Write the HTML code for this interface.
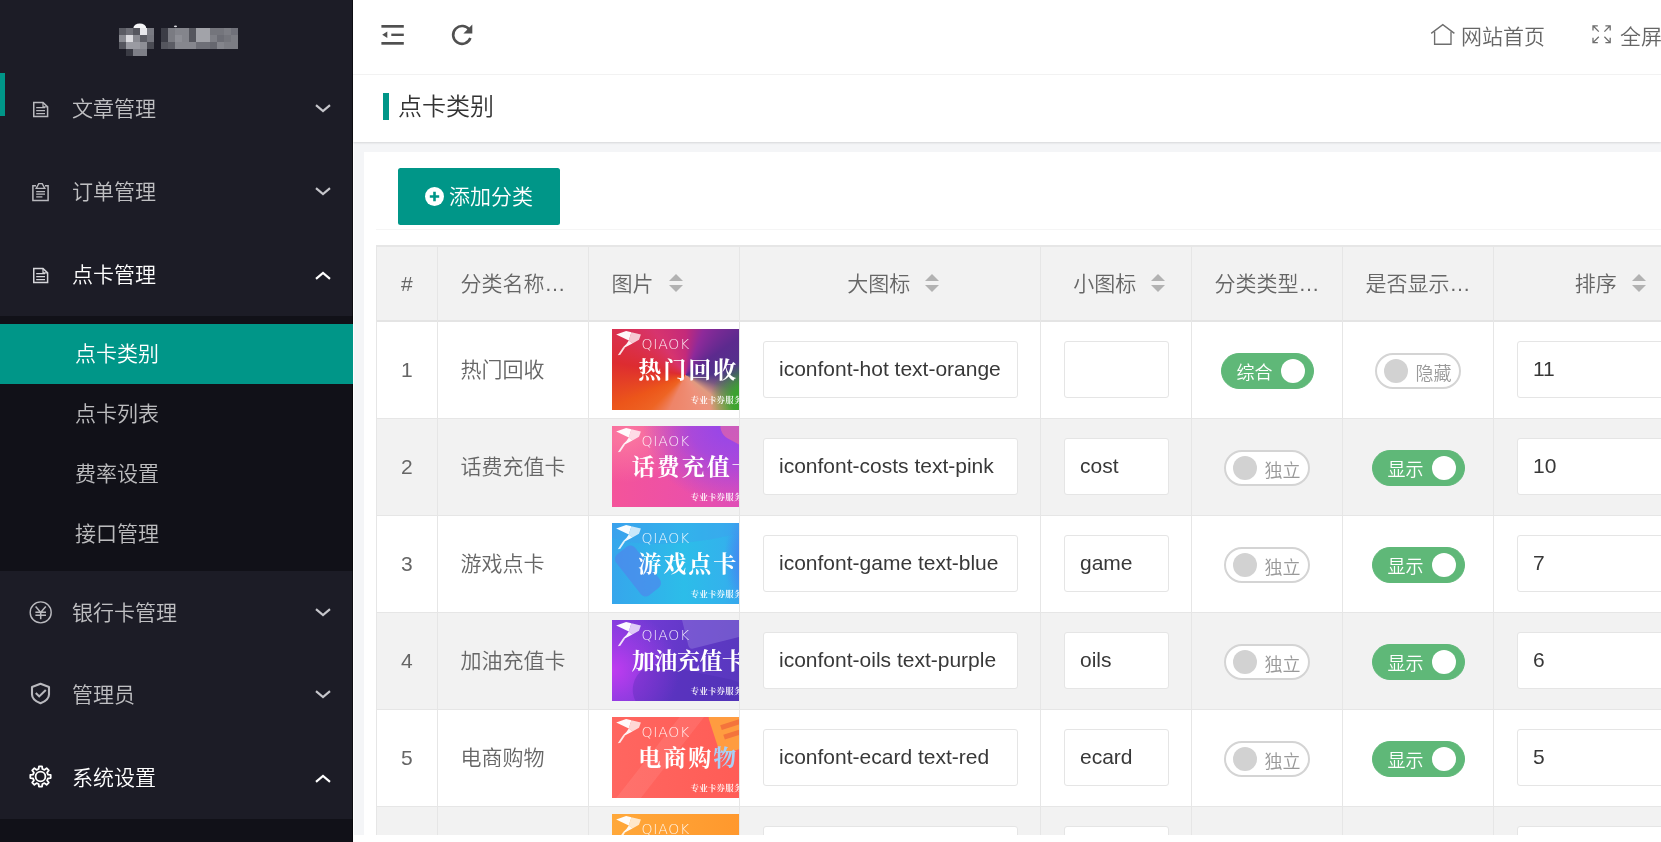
<!DOCTYPE html>
<html lang="zh-CN">
<head>
<meta charset="utf-8">
<title>点卡类别</title>
<style>
*{box-sizing:border-box;margin:0;padding:0}
html,body{width:1661px;height:842px;overflow:hidden;background:#fff}
body{position:relative;font-family:"Liberation Sans","Noto Sans CJK SC",sans-serif;font-size:21px;font-weight:350;color:#666}
#wrap{position:absolute;left:0;top:0;width:1661px;height:842px;overflow:hidden;will-change:transform}
.abs{position:absolute}
/* ---------- sidebar ---------- */
#side{position:absolute;left:0;top:0;width:353px;height:842px;background:#1c1c26;overflow:hidden;box-shadow:inset -1px 0 0 rgba(0,0,0,.5)}
.navbar{position:absolute;left:0;top:73px;width:5px;height:43px;background:#009688}
.nav-item{position:absolute;left:0;width:353px;height:83px;color:rgba(255,255,255,.72);font-size:21px;line-height:83px}
.nav-item.on{color:#fff}
.nav-item .txt{position:absolute;left:72px;top:0;white-space:nowrap}
.nav-item svg.ic{position:absolute}
.nav-item svg.chev{position:absolute;left:314.5px;top:36.5px}
.nav-item.on svg.chev{top:37.5px}
.child{position:absolute;left:0;width:353px;background:rgba(0,0,0,.36)}
.child .dd{position:absolute;left:0;width:353px;height:60px;line-height:60px;padding-left:75px;color:rgba(255,255,255,.72);font-size:21px;white-space:nowrap}
.child .dd.this{background:#009688;color:#fff}
/* ---------- header ---------- */
#top{position:absolute;left:353px;top:0;width:1308px;height:75px;background:#fff;border-bottom:1px solid #f4f4f4}
#top .lnk{position:absolute;top:0;height:74px;line-height:73px;font-size:21px;color:#666;white-space:nowrap}
#title{z-index:3;position:absolute;left:353px;top:75px;width:1308px;height:67px;background:#fff;box-shadow:0 1px 2px rgba(0,0,0,.12)}
#title .bar{position:absolute;left:30px;top:18px;width:6px;height:27px;background:#009688}
#title .t{position:absolute;left:45px;top:0;height:66px;line-height:64px;font-size:24px;color:#333;white-space:nowrap}
/* ---------- body ---------- */
#bodybg{position:absolute;left:354px;top:142px;width:1307px;height:693px;background:#f4f5f7}
#card{position:absolute;left:364px;top:152px;width:1297px;height:690px;background:#fff;overflow:hidden}
.btn{position:absolute;left:34px;top:16px;width:162px;height:57px;background:#009688;border-radius:2.5px;color:#fff;font-size:21px;line-height:56px;white-space:nowrap}
.btn svg{position:absolute;left:26px;top:18px}
.btn span{position:absolute;left:51px;top:1px}
.hr{position:absolute;left:12px;top:76.5px;width:1290px;height:1.5px;background:#f5f5f5}
#tbl{position:absolute;left:12px;top:93px;width:1285px;height:590px;overflow:hidden;background:#fff}
.thead{position:absolute;left:0;top:0;width:1285px;height:77px;background:#f2f2f2;border-top:2px solid #e6e6e6;border-bottom:2px solid #e4e4e4}
.th{position:absolute;top:0;height:73px;line-height:69px;padding-left:22.5px;color:#666;font-size:21px;white-space:nowrap;overflow:hidden}
.th.c{text-align:center;padding:0 22.5px}
.th span{vertical-align:middle}
.sort{display:inline-block;position:relative;width:15px;height:30px;margin-left:7.5px;vertical-align:middle}
.sort i{position:absolute;left:7.5px;width:0;height:0;border-left:7.5px solid transparent;border-right:7.5px solid transparent}
.sort .up{top:6px;border-bottom:7.5px solid #b2b2b2}
.sort .dn{top:16.5px;border-top:7.5px solid #b2b2b2}
.tr{position:absolute;left:0;width:1285px;height:97px;border-bottom:1px solid #e6e6e6;background:#fff}
.tr.even{background:#f2f2f2}
.td{position:absolute;top:0;height:96px;padding-left:22.5px;overflow:hidden}
.tx{line-height:96px;white-space:nowrap;color:#666;font-size:21px}
.vl{position:absolute;top:0;width:1px;height:600px;background:#e6e6e6}
.inp{position:absolute;left:22.5px;top:19px;height:57px;border:1.5px solid #e5e5e5;border-radius:3px;background:#fff;padding-left:15.5px;line-height:53px;color:#383838;font-size:21px;white-space:nowrap;overflow:hidden}
.sw{position:absolute;top:31px;height:36px;border-radius:18px;font-size:18px;line-height:35px}
.sw em{position:absolute;top:0;font-style:normal;white-space:nowrap}
.sw i{position:absolute;top:5px;width:24px;height:24px;border-radius:12px}
.sw.on{left:29px;width:93px;background:#5FB878;border:1px solid #5FB878}
.sw.on em{left:14.5px;top:2px;color:#fff}
.sw.on i{left:59px;background:#fff}
.sw.off{left:32px;width:86px;background:#fff;border:2px solid #d4d4d4}
.sw.off em{left:38.5px;color:#999;top:1.5px}
.sw.off i{left:6.5px;top:4px;background:#d2d2d2}
.bn{position:absolute;left:22.5px;top:7px;width:160px;height:80.5px;overflow:hidden;color:#fff}
.bn .bird{position:absolute;left:0;top:0}
.bn .lg{position:absolute;left:30px;top:8px;font-size:14px;line-height:15px;letter-spacing:.75px;color:rgba(255,255,255,.9);font-family:"DejaVu Sans Light","DejaVu Sans",sans-serif;font-weight:200}
.bn .tt{position:absolute;top:25px;font-family:"Noto Serif CJK SC","Noto Sans CJK SC",serif;font-weight:700;font-size:23px;line-height:30px;letter-spacing:2px;white-space:nowrap}
.bn .tt i{font-style:normal;color:#a9d0f6}
.bn .sm{position:absolute;left:79px;top:64px;font-family:"Noto Serif CJK SC","Noto Sans CJK SC",serif;font-weight:700;font-size:8.5px;line-height:12px;letter-spacing:.2px;white-space:nowrap;color:rgba(255,255,255,.88)}
.bn b{position:absolute;display:block}
.b1{background:radial-gradient(ellipse 26% 52% at 87% 90%,#34a62a 0%,rgba(52,166,42,.92) 45%,rgba(58,154,98,0) 100%),conic-gradient(from 0deg at 46% 57%,#c42a7a 0deg,#8e2a9a 22deg,#5c2a8e 55deg,#50348a 88deg,#7a5a80 106deg,#e09a80 128deg,#ee927c 150deg,#ee8468 205deg,#ee6424 226deg,#ec561a 246deg,#dd2c30 280deg,#d7346e 325deg,#c42a7a 360deg)}
.b1 .deco{left:134px;top:-4px;width:30px;height:26px;background:rgba(165,140,120,.55);border-radius:50% 50% 40% 40%}
.b1 .deco2{display:none}
.b2{background:radial-gradient(ellipse 55% 95% at 74% 0%,#9446ea 0%,rgba(148,70,234,.75) 45%,rgba(148,70,234,0) 100%),radial-gradient(ellipse 40% 60% at 8% 10%,#fb7aa0 0%,rgba(251,122,160,0) 100%),linear-gradient(90deg,#f4549a 0%,#ec50a8 45%,#d84cc0 100%)}
.b2 .deco{left:108px;top:-12px;width:60px;height:34px;background:rgba(250,110,150,.55);border-radius:14px;transform:rotate(28deg)}
.b2 .deco2{display:none}
.b3{background:radial-gradient(ellipse 30% 75% at 100% 45%,#4a78f2 0%,rgba(74,120,242,.85) 55%,rgba(74,120,242,0) 100%),linear-gradient(90deg,#36a6ec 0%,#2cbde9 45%,#33b2ec 70%,#3f90f0 100%)}
.b3 .deco{left:14.5px;top:22px;width:24px;height:52px;background:rgba(84,128,236,.6);border-radius:6px;transform:rotate(-38deg)}
.b3 .deco2{left:-10px;top:-34px;width:190px;height:52px;background:rgba(70,150,240,.28);border-radius:50%;transform:rotate(-8deg)}
.b4{background:radial-gradient(ellipse 42% 75% at 0% 62%,#c03cf0 0%,rgba(176,60,236,.6) 45%,rgba(150,60,230,0) 100%),linear-gradient(100deg,#7c3cdc 0%,#6238c8 45%,#5638bc 85%)}
.b4 .deco{left:72px;top:-14px;width:66px;height:36px;background:rgba(150,130,225,.42);transform:rotate(-14deg);border-radius:4px}
.b4 .deco2{left:20px;top:52px;width:120px;height:50px;background:rgba(70,40,170,.28);transform:rotate(12deg);border-radius:30px}
.b4 .tt{letter-spacing:-.4px}
.b5{background:linear-gradient(128deg,rgba(255,255,255,0) 0%,rgba(255,255,255,0) 30%,rgba(255,255,255,.08) 30.5%,rgba(255,255,255,.08) 41%,rgba(255,255,255,0) 41.5%),linear-gradient(90deg,#ff6660 0%,#ff5a54 100%)}
.b5 .deco{left:100px;top:-16px;width:60px;height:46px;border-radius:9px;background:#ff9c40;transform:rotate(-18deg)}
.b5 .deco2{left:108px;top:2px;width:40px;height:5px;background:#f4743c;transform:rotate(-18deg);box-shadow:0 10px 0 #f4743c}
.b6{background:linear-gradient(90deg,#ffa83a 0%,#ff942a 100%)}
.b6 .deco,.b6 .deco2{display:none}
</style>
</head>
<body>
<div id="wrap">
<div id="side">
<svg class="abs" style="left:110px;top:18px" width="140" height="44" viewBox="110 18 140 44" shape-rendering="crispEdges">
<ellipse cx="139.8" cy="28" rx="6.4" ry="4.6" fill="#f6f6f8" shape-rendering="auto"/>
<ellipse cx="175.5" cy="26.4" rx="1.6" ry="0.8" fill="#d8d8dc" shape-rendering="auto"/>
<g>
<rect x="119" y="28" width="7" height="7" fill="#5a5b63"/><rect x="126" y="28" width="7" height="7" fill="#6e6f77"/><rect x="133" y="28" width="7" height="7" fill="#55565e"/><rect x="140" y="28" width="7" height="7" fill="#e8e8ec"/><rect x="147" y="28" width="7" height="7" fill="#7a7b83"/>
<rect x="119" y="35" width="7" height="7" fill="#8a8b92"/><rect x="126" y="35" width="7" height="7" fill="#dcdce0"/><rect x="133" y="35" width="7" height="7" fill="#8a8b92"/><rect x="140" y="35" width="7" height="7" fill="#5c5d65"/><rect x="147" y="35" width="7" height="7" fill="#75767e"/>
<rect x="119" y="42" width="7" height="7" fill="#55565e"/><rect x="126" y="42" width="7" height="7" fill="#9a9ba2"/><rect x="133" y="42" width="7" height="7" fill="#9a9ba2"/><rect x="140" y="42" width="7" height="7" fill="#8e8f96"/><rect x="147" y="42" width="7" height="7" fill="#4a4b53"/>
<rect x="126" y="49" width="7" height="7" fill="#3a3b44"/><rect x="133" y="49" width="7" height="7" fill="#7e7f87"/><rect x="140" y="49" width="7" height="7" fill="#7e7f87"/>
</g>
<g>
<rect x="161" y="28" width="7" height="14" fill="#3c3d46"/><rect x="168" y="28" width="7" height="14" fill="#7a7b82"/><rect x="175" y="28" width="7" height="7" fill="#84858c"/><rect x="182" y="28" width="7" height="14" fill="#84858c"/><rect x="175" y="35" width="7" height="7" fill="#8e8f96"/><rect x="189" y="28" width="7" height="14" fill="#55565e"/><rect x="196" y="28" width="14" height="14" fill="#a2a3a9"/><rect x="210" y="28" width="14" height="7" fill="#74757c"/><rect x="224" y="28" width="7" height="7" fill="#7c7d84"/><rect x="231" y="28" width="7" height="7" fill="#70717a"/>
<rect x="210" y="35" width="7" height="7" fill="#7e7f86"/><rect x="217" y="35" width="7" height="7" fill="#6c6d75"/><rect x="224" y="35" width="7" height="7" fill="#74757c"/><rect x="231" y="35" width="7" height="7" fill="#7c7d84"/>
<rect x="161" y="42" width="7" height="7" fill="#55565e"/><rect x="168" y="42" width="7" height="7" fill="#5c5d65"/><rect x="175" y="42" width="21" height="7" fill="#86878e"/><rect x="196" y="42" width="14" height="7" fill="#6e6f77"/><rect x="210" y="42" width="7" height="7" fill="#66676f"/><rect x="217" y="42" width="7" height="7" fill="#84858c"/><rect x="224" y="42" width="14" height="7" fill="#7c7d84"/>
</g>
</svg>
<div class="navbar"></div>

<div class="nav-item" style="top:67px">
<svg class="ic" style="left:32px;top:34px" width="17" height="17" viewBox="0 0 17 17" fill="none" stroke="#b9b9be" stroke-width="1.5"><path d="M1.75 1.6H11L15.6 5.8V15.4H1.75Z"/><path d="M11 1.6V5.8H15.6" stroke-width="1.2"/><path d="M4.2 6.7H13M4.2 9.6H13M4.2 12.6H13" stroke-width="1.3"/></svg>
<span class="txt">文章管理</span>
<svg class="chev" width="16" height="9" viewBox="0 0 16 9" fill="none" stroke="#c6c6cb" stroke-width="2.2"><path d="M1 1.2L8 7L15 1.2"/></svg>
</div>

<div class="nav-item" style="top:150px">
<svg class="ic" style="left:31px;top:32px" width="19" height="20" viewBox="0 0 19 20" fill="none" stroke="#b9b9be" stroke-width="1.5"><path d="M5 3.8H1.9V18.6H17.1V3.8H14"/><path d="M5.2 6.4L7.8 1.6H11.2L13.8 6.4Z" stroke-width="1.4"/><path d="M5.2 9.6H14M5.2 12.2H14M5.2 14.9H11.4" stroke-width="1.3"/></svg>
<span class="txt">订单管理</span>
<svg class="chev" width="16" height="9" viewBox="0 0 16 9" fill="none" stroke="#c6c6cb" stroke-width="2.2"><path d="M1 1.2L8 7L15 1.2"/></svg>
</div>

<div class="nav-item on" style="top:233px">
<svg class="ic" style="left:32px;top:34px" width="17" height="17" viewBox="0 0 17 17" fill="none" stroke="#d6d6da" stroke-width="1.5"><path d="M1.75 1.6H11L15.6 5.8V15.4H1.75Z"/><path d="M11 1.6V5.8H15.6" stroke-width="1.2"/><path d="M4.2 6.7H13M4.2 9.6H13M4.2 12.6H13" stroke-width="1.3"/></svg>
<span class="txt">点卡管理</span>
<svg class="chev" width="16" height="9" viewBox="0 0 16 9" fill="none" stroke="#fff" stroke-width="2.2"><path d="M1 7.8L8 2L15 7.8"/></svg>
</div>

<div class="child" style="top:316px;height:255px">
<div class="dd this" style="top:8px">点卡类别</div>
<div class="dd" style="top:68px">点卡列表</div>
<div class="dd" style="top:128px">费率设置</div>
<div class="dd" style="top:188px">接口管理</div>
</div>

<div class="nav-item" style="top:571px">
<svg class="ic" style="left:28px;top:29px" width="25" height="25" viewBox="0 0 25 25" fill="none" stroke="#b9b9be" stroke-width="1.55"><circle cx="12.7" cy="12.4" r="10.5" stroke-width="1.4"/><path d="M7.6 6.4L12.7 12.4L17.8 6.4M12.7 12.4V19.2M7.4 12.2H18M7.4 15.2H18"/></svg>
<span class="txt">银行卡管理</span>
<svg class="chev" width="16" height="9" viewBox="0 0 16 9" fill="none" stroke="#c6c6cb" stroke-width="2.2"><path d="M1 1.2L8 7L15 1.2"/></svg>
</div>

<div class="nav-item" style="top:653px">
<svg class="ic" style="left:29px;top:28px" width="23" height="26" viewBox="0 0 23 26" fill="none" stroke="#b9b9be" stroke-width="1.9"><path d="M11.5 2.7L20 5.9V13.4C20 17.4 16.6 20.2 11.5 22.3C6.4 20.2 3 17.4 3 13.4V5.9Z" stroke-width="2.1" stroke-linejoin="round"/><path d="M6.8 12L10.2 15.4L16.8 9" stroke-width="2.1"/></svg>
<span class="txt">管理员</span>
<svg class="chev" width="16" height="9" viewBox="0 0 16 9" fill="none" stroke="#c6c6cb" stroke-width="2.2"><path d="M1 1.2L8 7L15 1.2"/></svg>
</div>

<div class="nav-item on" style="top:736px">
<svg class="ic" style="left:28px;top:28px" width="25" height="25" viewBox="-12.5 -12.5 25 25" fill="none" stroke="#fff" stroke-width="1.8" stroke-linejoin="round"><circle cx="0" cy="0" r="4.9"/><path d="M-1.91 -7.46 L-1.54 -10.18 L1.54 -10.18 L1.91 -7.46 L3.93 -6.62 L6.11 -8.29 L8.29 -6.11 L6.62 -3.93 L7.46 -1.91 L10.18 -1.54 L10.18 1.54 L7.46 1.91 L6.62 3.93 L8.29 6.11 L6.11 8.29 L3.93 6.62 L1.91 7.46 L1.54 10.18 L-1.54 10.18 L-1.91 7.46 L-3.93 6.62 L-6.11 8.29 L-8.29 6.11 L-6.62 3.93 L-7.46 1.91 L-10.18 1.54 L-10.18 -1.54 L-7.46 -1.91 L-6.62 -3.93 L-8.29 -6.11 L-6.11 -8.29 L-3.93 -6.62Z"/></svg>
<span class="txt">系统设置</span>
<svg class="chev" width="16" height="9" viewBox="0 0 16 9" fill="none" stroke="#fff" stroke-width="2.2"><path d="M1 7.8L8 2L15 7.8"/></svg>
</div>

<div class="child" style="top:819px;height:40px"></div>
</div>
<div id="top">
<svg class="abs" style="left:26px;top:22px" width="28" height="26" viewBox="379 22 28 26" fill="#505050"><rect x="381.4" y="25" width="22.4" height="2.7"/><rect x="391.3" y="33.6" width="12.5" height="2.4"/><path d="M382.2 34.8L387.3 31.6V38Z"/><rect x="381.4" y="42" width="22.4" height="2.7"/></svg>
<svg class="abs" style="left:95px;top:21px" width="28" height="28" viewBox="448 21 28 28" fill="none"><path d="M469.6 30.2A8.9 8.9 0 1 0 470.4 38" stroke="#505050" stroke-width="2.6"/><path d="M472.3 24.6V33.4H463.4Z" fill="#505050"/></svg>
<svg class="abs" style="left:1075px;top:21px" width="30" height="27" viewBox="1428 21 30 27" fill="none" stroke="#6e6e6e" stroke-width="1.35"><path d="M1431.2 33.4L1442.8 24.6L1454.4 33.4"/><path d="M1434.6 31.4V44.2H1451V31.4"/></svg>
<span class="lnk" style="left:1108px">网站首页</span>
<svg class="abs" style="left:1237px;top:23px" width="24" height="23" viewBox="1590 23 24 23" fill="none" stroke="#6e6e6e" stroke-width="1.3"><path d="M1593 25.8L1598.8 31.6M1593 30.6V25.8H1597.8"/><path d="M1610.2 25.8L1604.4 31.6M1605.4 25.8H1610.2V30.6"/><path d="M1593 42.6L1598.8 36.8M1593 37.8V42.6H1597.8"/><path d="M1610.2 42.6L1604.4 36.8M1605.4 42.6H1610.2V37.8"/></svg>
<span class="lnk" style="left:1267px">全屏</span>
</div>
<div id="title"><div class="bar"></div><div class="t">点卡类别</div></div>
<div id="bodybg"></div>
<div id="card">
<div class="btn"><svg width="21" height="21" viewBox="0 0 21 21"><circle cx="10.5" cy="10.5" r="9.5" fill="#fff"/><path d="M10.5 5.8V15.2M5.8 10.5H15.2" stroke="#009688" stroke-width="2.6"/></svg><span>添加分类</span></div>
<div class="hr"></div>
<div id="tbl">
<div class="thead">
<div class="th" style="left:1px;width:60px;padding-left:24px"><span>#</span></div>
<div class="th" style="left:62px;width:150px"><span>分类名称…</span></div>
<div class="th" style="left:213px;width:150px"><span>图片</span><span class="sort"><i class="up"></i><i class="dn"></i></span></div>
<div class="th c" style="left:364px;width:300px"><span>大图标</span><span class="sort"><i class="up"></i><i class="dn"></i></span></div>
<div class="th c" style="left:665px;width:150px"><span>小图标</span><span class="sort"><i class="up"></i><i class="dn"></i></span></div>
<div class="th" style="left:816px;width:150px"><span>分类类型…</span></div>
<div class="th" style="left:967px;width:150px"><span>是否显示…</span></div>
<div class="th c" style="left:1118px;width:226px"><span>排序</span><span class="sort"><i class="up"></i><i class="dn"></i></span></div>
</div>
<div class="tr" style="top:77px">
<div class="td" style="left:1px;width:60px;padding-left:24px"><span class="tx">1</span></div>
<div class="td" style="left:62px;width:150px"><span class="tx">热门回收</span></div>
<div class="td" style="left:213px;width:150px"><div class="bn b1"><b class="deco"></b><b class="deco2"></b><svg class="bird" width="32" height="30" viewBox="0 0 32 30"><path d="M4.2 5.6L14.1 1.9L19.4 3.2L16.8 11.4Z" fill="#fff" fill-opacity=".97"/><path d="M14.1 1.9L28.9 5.4L27 10.8L20.4 14.6L16.8 11.4L19.4 3.2Z" fill="#fff" fill-opacity=".74"/><path d="M16.8 11.4L20.4 14.6L13.3 18.3L11.2 18L14.4 15Z" fill="#fff" fill-opacity=".93"/><path d="M13.3 18.3L8.3 25.8L5.8 26.2L11.2 18Z" fill="#fff" fill-opacity=".85"/></svg><span class="lg">QIAOK</span><span class="tt" style="left:26.8px">热门回收</span><span class="sm">专业卡券服务</span></div></div>
<div class="td" style="left:364px;width:300px"><div class="inp" style="width:255px">iconfont-hot text-orange</div></div>
<div class="td" style="left:665px;width:150px"><div class="inp" style="width:105px"></div></div>
<div class="td" style="left:816px;width:150px"><div class="sw on"><em>综合</em><i></i></div></div>
<div class="td" style="left:967px;width:150px"><div class="sw off"><em>隐藏</em><i></i></div></div>
<div class="td" style="left:1118px;width:226px"><div class="inp" style="width:181px">11</div></div>
</div>
<div class="tr even" style="top:174px">
<div class="td" style="left:1px;width:60px;padding-left:24px"><span class="tx">2</span></div>
<div class="td" style="left:62px;width:150px"><span class="tx">话费充值卡</span></div>
<div class="td" style="left:213px;width:150px"><div class="bn b2"><b class="deco"></b><b class="deco2"></b><svg class="bird" width="32" height="30" viewBox="0 0 32 30"><path d="M4.2 5.6L14.1 1.9L19.4 3.2L16.8 11.4Z" fill="#fff" fill-opacity=".97"/><path d="M14.1 1.9L28.9 5.4L27 10.8L20.4 14.6L16.8 11.4L19.4 3.2Z" fill="#fff" fill-opacity=".74"/><path d="M16.8 11.4L20.4 14.6L13.3 18.3L11.2 18L14.4 15Z" fill="#fff" fill-opacity=".93"/><path d="M13.3 18.3L8.3 25.8L5.8 26.2L11.2 18Z" fill="#fff" fill-opacity=".85"/></svg><span class="lg">QIAOK</span><span class="tt" style="left:20.2px">话费充值卡</span><span class="sm">专业卡券服务</span></div></div>
<div class="td" style="left:364px;width:300px"><div class="inp" style="width:255px">iconfont-costs text-pink</div></div>
<div class="td" style="left:665px;width:150px"><div class="inp" style="width:105px">cost</div></div>
<div class="td" style="left:816px;width:150px"><div class="sw off"><em>独立</em><i></i></div></div>
<div class="td" style="left:967px;width:150px"><div class="sw on"><em>显示</em><i></i></div></div>
<div class="td" style="left:1118px;width:226px"><div class="inp" style="width:181px">10</div></div>
</div>
<div class="tr" style="top:271px">
<div class="td" style="left:1px;width:60px;padding-left:24px"><span class="tx">3</span></div>
<div class="td" style="left:62px;width:150px"><span class="tx">游戏点卡</span></div>
<div class="td" style="left:213px;width:150px"><div class="bn b3"><b class="deco"></b><b class="deco2"></b><svg class="bird" width="32" height="30" viewBox="0 0 32 30"><path d="M4.2 5.6L14.1 1.9L19.4 3.2L16.8 11.4Z" fill="#fff" fill-opacity=".97"/><path d="M14.1 1.9L28.9 5.4L27 10.8L20.4 14.6L16.8 11.4L19.4 3.2Z" fill="#fff" fill-opacity=".74"/><path d="M16.8 11.4L20.4 14.6L13.3 18.3L11.2 18L14.4 15Z" fill="#fff" fill-opacity=".93"/><path d="M13.3 18.3L8.3 25.8L5.8 26.2L11.2 18Z" fill="#fff" fill-opacity=".85"/></svg><span class="lg">QIAOK</span><span class="tt" style="left:26.8px">游戏点卡</span><span class="sm">专业卡券服务</span></div></div>
<div class="td" style="left:364px;width:300px"><div class="inp" style="width:255px">iconfont-game text-blue</div></div>
<div class="td" style="left:665px;width:150px"><div class="inp" style="width:105px">game</div></div>
<div class="td" style="left:816px;width:150px"><div class="sw off"><em>独立</em><i></i></div></div>
<div class="td" style="left:967px;width:150px"><div class="sw on"><em>显示</em><i></i></div></div>
<div class="td" style="left:1118px;width:226px"><div class="inp" style="width:181px">7</div></div>
</div>
<div class="tr even" style="top:368px">
<div class="td" style="left:1px;width:60px;padding-left:24px"><span class="tx">4</span></div>
<div class="td" style="left:62px;width:150px"><span class="tx">加油充值卡</span></div>
<div class="td" style="left:213px;width:150px"><div class="bn b4"><b class="deco"></b><b class="deco2"></b><svg class="bird" width="32" height="30" viewBox="0 0 32 30"><path d="M4.2 5.6L14.1 1.9L19.4 3.2L16.8 11.4Z" fill="#fff" fill-opacity=".97"/><path d="M14.1 1.9L28.9 5.4L27 10.8L20.4 14.6L16.8 11.4L19.4 3.2Z" fill="#fff" fill-opacity=".74"/><path d="M16.8 11.4L20.4 14.6L13.3 18.3L11.2 18L14.4 15Z" fill="#fff" fill-opacity=".93"/><path d="M13.3 18.3L8.3 25.8L5.8 26.2L11.2 18Z" fill="#fff" fill-opacity=".85"/></svg><span class="lg">QIAOK</span><span class="tt" style="left:20.2px">加油充值卡</span><span class="sm">专业卡券服务</span></div></div>
<div class="td" style="left:364px;width:300px"><div class="inp" style="width:255px">iconfont-oils text-purple</div></div>
<div class="td" style="left:665px;width:150px"><div class="inp" style="width:105px">oils</div></div>
<div class="td" style="left:816px;width:150px"><div class="sw off"><em>独立</em><i></i></div></div>
<div class="td" style="left:967px;width:150px"><div class="sw on"><em>显示</em><i></i></div></div>
<div class="td" style="left:1118px;width:226px"><div class="inp" style="width:181px">6</div></div>
</div>
<div class="tr" style="top:465px">
<div class="td" style="left:1px;width:60px;padding-left:24px"><span class="tx">5</span></div>
<div class="td" style="left:62px;width:150px"><span class="tx">电商购物</span></div>
<div class="td" style="left:213px;width:150px"><div class="bn b5"><b class="deco"></b><b class="deco2"></b><svg class="bird" width="32" height="30" viewBox="0 0 32 30"><path d="M4.2 5.6L14.1 1.9L19.4 3.2L16.8 11.4Z" fill="#fff" fill-opacity=".97"/><path d="M14.1 1.9L28.9 5.4L27 10.8L20.4 14.6L16.8 11.4L19.4 3.2Z" fill="#fff" fill-opacity=".74"/><path d="M16.8 11.4L20.4 14.6L13.3 18.3L11.2 18L14.4 15Z" fill="#fff" fill-opacity=".93"/><path d="M13.3 18.3L8.3 25.8L5.8 26.2L11.2 18Z" fill="#fff" fill-opacity=".85"/></svg><span class="lg">QIAOK</span><span class="tt" style="left:26.8px">电商购<i>物</i></span><span class="sm">专业卡券服务</span></div></div>
<div class="td" style="left:364px;width:300px"><div class="inp" style="width:255px">iconfont-ecard text-red</div></div>
<div class="td" style="left:665px;width:150px"><div class="inp" style="width:105px">ecard</div></div>
<div class="td" style="left:816px;width:150px"><div class="sw off"><em>独立</em><i></i></div></div>
<div class="td" style="left:967px;width:150px"><div class="sw on"><em>显示</em><i></i></div></div>
<div class="td" style="left:1118px;width:226px"><div class="inp" style="width:181px">5</div></div>
</div>
<div class="tr even" style="top:562px">
<div class="td" style="left:1px;width:60px;padding-left:24px"><span class="tx">6</span></div>
<div class="td" style="left:62px;width:150px"><span class="tx"></span></div>
<div class="td" style="left:213px;width:150px"><div class="bn b6"><b class="deco"></b><b class="deco2"></b><svg class="bird" width="32" height="30" viewBox="0 0 32 30"><path d="M4.2 5.6L14.1 1.9L19.4 3.2L16.8 11.4Z" fill="#fff" fill-opacity=".97"/><path d="M14.1 1.9L28.9 5.4L27 10.8L20.4 14.6L16.8 11.4L19.4 3.2Z" fill="#fff" fill-opacity=".74"/><path d="M16.8 11.4L20.4 14.6L13.3 18.3L11.2 18L14.4 15Z" fill="#fff" fill-opacity=".93"/><path d="M13.3 18.3L8.3 25.8L5.8 26.2L11.2 18Z" fill="#fff" fill-opacity=".85"/></svg><span class="lg">QIAOK</span><span class="tt" style="left:26.8px"></span><span class="sm">专业卡券服务</span></div></div>
<div class="td" style="left:364px;width:300px"><div class="inp" style="width:255px"></div></div>
<div class="td" style="left:665px;width:150px"><div class="inp" style="width:105px"></div></div>
<div class="td" style="left:816px;width:150px"></div>
<div class="td" style="left:967px;width:150px"></div>
<div class="td" style="left:1118px;width:226px"><div class="inp" style="width:181px"></div></div>
</div>
<div class="vl" style="left:0px"></div>
<div class="vl" style="left:61px"></div>
<div class="vl" style="left:212px"></div>
<div class="vl" style="left:363px"></div>
<div class="vl" style="left:664px"></div>
<div class="vl" style="left:815px"></div>
<div class="vl" style="left:966px"></div>
<div class="vl" style="left:1117px"></div>
</div>
</div>
</div>
</body>
</html>
